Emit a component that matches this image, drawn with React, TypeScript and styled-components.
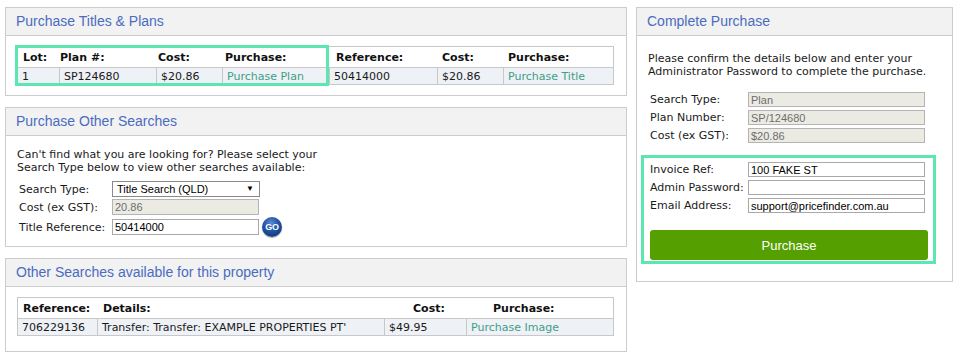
import React from 'react';
import styled, { createGlobalStyle } from 'styled-components';

const Global = createGlobalStyle`
  html, body { margin: 0; padding: 0; background: #ffffff; }
  body {
    font-family: "DejaVu Sans", Verdana, sans-serif;
    font-size: 11px;
    color: #222222;
  }
  * { box-sizing: border-box; }
`;

const Page = styled.div`
  display: flex;
  align-items: flex-start;
  gap: 9px;
  padding: 7px 0 0 5px;
`;

const Column = styled.div<{ $width: number }>`
  width: ${(p) => p.$width}px;
  display: flex;
  flex-direction: column;
  gap: 11px;
`;

const Panel = styled.section`
  border: 1px solid #cccccc;
  background: #ffffff;
`;

const PanelHeader = styled.h2`
  margin: 0;
  height: 28px;
  padding: 0 0 1px 10px;
  display: flex;
  align-items: center;
  background: #f2f2f2;
  border-bottom: 1px solid #cccccc;
  font: 14px "Liberation Sans", Arial, sans-serif;
  color: #4a6cbf;
`;

const PanelBody = styled.div<{ $pad: string }>`
  padding: ${(p) => p.$pad};
`;

const Highlighted = styled.div`
  position: relative;
`;

const Highlight = styled.div<{ $l: number; $t: number; $w: number; $h: number }>`
  position: absolute;
  left: ${(p) => p.$l}px;
  top: ${(p) => p.$t}px;
  width: ${(p) => p.$w}px;
  height: ${(p) => p.$h}px;
  border: 3px solid #5ce6b0;
  pointer-events: none;
`;

const TableFrame = styled.div`
  width: 597px;
  border: 1px solid #c8c8c8;
`;

const HeadRow = styled.div<{ $cols: string }>`
  display: grid;
  grid-template-columns: ${(p) => p.$cols};
  height: 21px;
  border-bottom: 1px solid #c8c8c8;
  background: #ffffff;
`;

const HeadCell = styled.div`
  padding-left: 5px;
  display: flex;
  align-items: center;
  font-weight: bold;
  color: #111111;
  white-space: nowrap;
`;

const DataRow = styled.div<{ $cols: string }>`
  display: grid;
  grid-template-columns: ${(p) => p.$cols};
  height: 16px;
  background: #eef1f6;
`;

const DataCell = styled.div`
  padding-left: 4px;
  display: flex;
  align-items: center;
  white-space: nowrap;
  overflow: hidden;
  color: #1a1a1a;
  & + & { border-left: 1px solid #c8c8c8; }
`;

const Link = styled.a`
  color: #3e9e86;
  text-decoration: none;
  cursor: pointer;
`;

const Para = styled.p`
  margin: 0;
  line-height: 13px;
  color: #1a1a1a;
`;

const FormGrid = styled.div<{ $label: number; $mt: number; $rowGap: number }>`
  display: grid;
  grid-template-columns: ${(p) => p.$label}px auto;
  row-gap: ${(p) => p.$rowGap}px;
  align-items: center;
  margin: ${(p) => p.$mt}px 0 0 2px;
  justify-content: start;
`;

const Label = styled.label`
  white-space: nowrap;
  color: #1a1a1a;
  line-height: 15px;
`;

const Field = styled.input<{ $w: number; $h: number }>`
  width: ${(p) => p.$w}px;
  height: ${(p) => p.$h}px;
  margin: 0;
  padding: 0 2px;
  border: 1px solid #a9a9a9;
  border-radius: 0;
  background: #ffffff;
  color: #000000;
  font: 11px "Liberation Sans", Arial, sans-serif;
  outline: none;
  &:read-only {
    background: #ebebe4;
    color: #6d6d6d;
    border-color: #b4b4b4;
  }
`;

const SelectBox = styled.div`
  width: 148px;
  height: 16px;
  border: 1px solid #8a8a8a;
  background: #ffffff;
  display: flex;
  align-items: center;
  justify-content: space-between;
  padding: 0 5px 0 4px;
  font: 11px "Liberation Sans", Arial, sans-serif;
  color: #000000;
`;

const Arrow = styled.span`
  font-size: 8px;
  line-height: 1;
  color: #000000;
`;

const InlineField = styled.div`
  display: flex;
  align-items: center;
  gap: 3px;
`;

const GoButton = styled.button`
  width: 20px;
  height: 20px;
  border-radius: 50%;
  border: none;
  padding: 0;
  background: radial-gradient(circle at 45% 30%, #5a8bd6 0%, #2456a8 40%, #0d2c69 100%);
  box-shadow: 0 1px 1px rgba(0, 0, 0, 0.35);
  color: #ffffff;
  font: bold 9px "Liberation Sans", Arial, sans-serif;
  letter-spacing: -0.3px;
  display: flex;
  align-items: center;
  justify-content: center;
`;

const InvoiceGroup = styled.div`
  position: relative;
  margin-top: 19px;
`;

const PurchaseButton = styled.button`
  margin: 17px 0 0 2px;
  width: 278px;
  height: 30px;
  border: none;
  border-radius: 3px;
  background: #55a000;
  color: #ffffff;
  font: 13px "Liberation Sans", Arial, sans-serif;
  cursor: pointer;
`;

const T1_HEAD = '37px 98px 67px 111px 106px 66px 110px';
const T1_DATA = '41px 97px 66px 107px 108px 66px 110px';
const T3_HEAD = '80px 310px 80px 125px';
const T3_DATA = '79px 287px 82px 147px';

export default function App() {
  return (
    <>
      <Global />
      <Page>
        <Column $width={622}>
          <Panel>
            <PanelHeader>Purchase Titles &amp; Plans</PanelHeader>
            <PanelBody $pad="10px 12px 10px 11px">
              <Highlighted>
                <TableFrame>
                  <HeadRow $cols={T1_HEAD}>
                    <HeadCell>Lot:</HeadCell>
                    <HeadCell>Plan #:</HeadCell>
                    <HeadCell>Cost:</HeadCell>
                    <HeadCell>Purchase:</HeadCell>
                    <HeadCell>Reference:</HeadCell>
                    <HeadCell>Cost:</HeadCell>
                    <HeadCell>Purchase:</HeadCell>
                  </HeadRow>
                  <DataRow $cols={T1_DATA}>
                    <DataCell>1</DataCell>
                    <DataCell>SP124680</DataCell>
                    <DataCell>$20.86</DataCell>
                    <DataCell><Link>Purchase Plan</Link></DataCell>
                    <DataCell>50414000</DataCell>
                    <DataCell>$20.86</DataCell>
                    <DataCell><Link>Purchase Title</Link></DataCell>
                  </DataRow>
                </TableFrame>
                <Highlight $l={-2} $t={-1} $w={314} $h={41} />
              </Highlighted>
            </PanelBody>
          </Panel>

          <Panel>
            <PanelHeader>Purchase Other Searches</PanelHeader>
            <PanelBody $pad="12px 12px 9px 11px">
              <Para>
                Can't find what you are looking for? Please select your
                <br />
                Search Type below to view other searches available:
              </Para>
              <FormGrid $label={93} $mt={7} $rowGap={2}>
                <Label>Search Type:</Label>
                <SelectBox>
                  <span>Title Search (QLD)</span>
                  <Arrow>▼</Arrow>
                </SelectBox>
                <Label>Cost (ex GST):</Label>
                <Field $w={147} $h={16} value="20.86" readOnly />
                <Label>Title Reference:</Label>
                <InlineField>
                  <Field $w={147} $h={16} defaultValue="50414000" />
                  <GoButton type="button">GO</GoButton>
                </InlineField>
              </FormGrid>
            </PanelBody>
          </Panel>

          <Panel>
            <PanelHeader>Other Searches available for this property</PanelHeader>
            <PanelBody $pad="10px 12px 15px 11px">
              <TableFrame>
                <HeadRow $cols={T3_HEAD}>
                  <HeadCell>Reference:</HeadCell>
                  <HeadCell>Details:</HeadCell>
                  <HeadCell>Cost:</HeadCell>
                  <HeadCell>Purchase:</HeadCell>
                </HeadRow>
                <DataRow $cols={T3_DATA}>
                  <DataCell>706229136</DataCell>
                  <DataCell>Transfer: Transfer: EXAMPLE PROPERTIES PT'</DataCell>
                  <DataCell>$49.95</DataCell>
                  <DataCell><Link>Purchase Image</Link></DataCell>
                </DataRow>
              </TableFrame>
            </PanelBody>
          </Panel>
        </Column>

        <Column $width={317}>
          <Panel>
            <PanelHeader>Complete Purchase</PanelHeader>
            <PanelBody $pad="16px 10px 21px 11px">
              <Para>
                Please confirm the details below and enter your
                <br />
                Administrator Password to complete the purchase.
              </Para>
              <FormGrid $label={98} $mt={14} $rowGap={3}>
                <Label>Search Type:</Label>
                <Field $w={177} $h={15} value="Plan" readOnly />
                <Label>Plan Number:</Label>
                <Field $w={177} $h={15} value="SP/124680" readOnly />
                <Label>Cost (ex GST):</Label>
                <Field $w={177} $h={15} value="$20.86" readOnly />
              </FormGrid>
              <InvoiceGroup>
                <FormGrid $label={98} $mt={0} $rowGap={3}>
                  <Label>Invoice Ref:</Label>
                  <Field $w={177} $h={15} defaultValue="100 FAKE ST" />
                  <Label>Admin Password:</Label>
                  <Field $w={177} $h={15} type="password" defaultValue="" />
                  <Label>Email Address:</Label>
                  <Field $w={177} $h={15} defaultValue="support@pricefinder.com.au" />
                </FormGrid>
                <PurchaseButton type="button">Purchase</PurchaseButton>
                <Highlight $l={-7} $t={-7} $w={295} $h={109} />
              </InvoiceGroup>
            </PanelBody>
          </Panel>
        </Column>
      </Page>
    </>
  );
}
